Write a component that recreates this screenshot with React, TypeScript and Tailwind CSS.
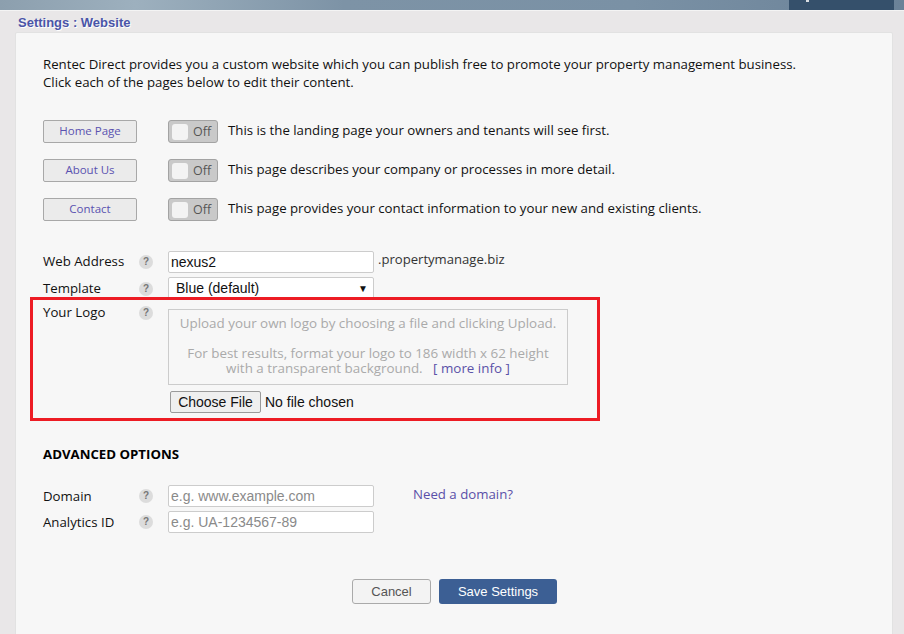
import React from 'react';

const sans = 'font-["Open_Sans",sans-serif]';
const arial = 'font-["Liberation_Sans",Arial,sans-serif]';

const pages = [
  { name: 'Home Page', text: 'This is the landing page your owners and tenants will see first.' },
  { name: 'About Us', text: 'This page describes your company or processes in more detail.' },
  { name: 'Contact', text: 'This page provides your contact information to your new and existing clients.' },
];

const Help = ({ className = '' }: { className?: string }) => (
  <span className={`flex h-[14px] w-[14px] shrink-0 items-center justify-center rounded-full bg-[#dcdcdc] text-[10px] leading-none font-bold text-[#777] ${arial} ${className}`}>
    ?
  </span>
);

const Toggle = () => (
  <div className="flex h-[23px] w-[50px] items-center rounded-[3px] border border-[#a3a3a3] bg-[#c9c9c9] pl-[3px]">
    <span className="h-[16px] w-[16px] rounded-[3px] bg-[#f3f3f3]" />
    <span className="mt-[2px] ml-[5px] text-[12.5px] leading-none text-[#555]">Off</span>
  </div>
);

export default function App() {
  return (
    <div className={`relative h-[634px] w-[904px] overflow-hidden bg-[#e9e7e8] ${sans}`}>
      {/* Top banner */}
      <div className="flex h-[11px] justify-end border-b border-[#f4f4f4] bg-[linear-gradient(90deg,#8c9fae_0%,#9db0be_15%,#7d93a6_38%,#7a91a5_70%,#6b8298_100%)] pr-[10px]">
        <div className="flex h-full w-[105px] justify-start bg-[#35506b] pl-[17px]">
          <span className="h-[2px] w-[3px] bg-[#d8dde2]" />
        </div>
      </div>

      <h1 className={`mt-[4px] ml-[18px] text-[13px] leading-[15px] font-bold text-[#4a55a8] [text-shadow:1px_1px_0_#fff] ${arial}`}>Settings : Website</h1>

      {/* Card */}
      <div className="mt-[2px] ml-[15px] h-[620px] w-[878px] rounded-t-[2px] border border-[#e2e2e2] bg-[#f7f7f7] pt-[22px] pl-[27px] text-[13.24px] text-[#111]">
        <p className="leading-[18px]">
          Rentec Direct provides you a custom website which you can publish free to promote your property management business.
          <br />
          Click each of the pages below to edit their content.
        </p>

        {/* Page rows */}
        <div className="mt-[29px] flex flex-col gap-[16px]">
          {pages.map((p) => (
            <div key={p.name} className="flex h-[23px] items-center">
              <button className="h-[23px] w-[94px] rounded-[2px] border border-[#a8a8a8] bg-[#ebebeb] pb-[1px] text-[11.5px] text-[#5a52b0]">
                {p.name}
              </button>
              <div className="ml-[31px]">
                <Toggle />
              </div>
              <span className="ml-[10px] -mt-[2px]">{p.text}</span>
            </div>
          ))}
        </div>

        {/* Site fields */}
        <div className="mt-[30px] flex h-[22px] items-center">
          <span className="w-[96px]">Web Address</span>
          <Help />
          <input
            readOnly
            value="nexus2"
            className={`ml-[15px] h-[22px] w-[206px] rounded-[2px] border border-[#ccc] bg-white px-[2px] text-[14px] text-[#111] ${arial}`}
          />
          <span className="ml-[4px] -mt-[4px] text-[13.1px] text-[#333]">.propertymanage.biz</span>
        </div>
        <div className="mt-[4px] flex h-[23px] items-center">
          <span className="w-[96px]">Template</span>
          <Help />
          <div className={`ml-[15px] flex h-[23px] w-[206px] items-center justify-between rounded-[2px] border border-[#ccc] bg-white pr-[5px] pl-[7px] text-[14px] ${arial}`}>
            <span>Blue (default)</span>
            <span className="text-[10px]">▼</span>
          </div>
        </div>

        <div className="mt-[4px] flex items-start">
          <span className="-mt-[1px] w-[96px]">Your Logo</span>
          <Help className="mt-[2px]" />
          <div className="ml-[15px] pt-[5px]">
            <div className="h-[76px] w-[400px] border border-[#ccc] pt-[6px] text-center text-[13.4px] leading-[15px] text-[#aaa]">
              Upload your own logo by choosing a file and clicking Upload.
              <br />
              <br />
              For best results, format your logo to 186 width x 62 height
              <br />
              with a transparent background. &nbsp; <span className="text-[#5a52a8]">[ more info ]</span>
            </div>
            <div className={`mt-[6px] flex items-center text-[14px] ${arial}`}>
              <button className="ml-[2px] h-[22px] w-[91px] rounded-[2px] border border-[#9a9a9a] bg-[#efefef] text-[14px] text-[#111]">Choose File</button>
              <span className="ml-[4px]">No file chosen</span>
            </div>
          </div>
        </div>

        {/* Advanced */}
        <h2 className="mt-[32px] text-[13.24px] leading-[18px] font-bold text-black">ADVANCED OPTIONS</h2>

        <div className="mt-[22px] flex h-[22px] items-center">
          <span className="mt-[1px] w-[96px]">Domain</span>
          <Help />
          <input readOnly placeholder="e.g. www.example.com" className={`ml-[15px] h-[22px] w-[206px] rounded-[2px] border border-[#ccc] bg-white px-[2px] text-[14px] placeholder:text-[#8a8a8a] ${arial}`} />
          <span className="ml-[39px] -mt-[3px] text-[#5a4fa8]">Need a domain?</span>
        </div>
        <div className="mt-[4px] flex h-[22px] items-center">
          <span className="mt-[1px] w-[96px]">Analytics ID</span>
          <Help />
          <input readOnly placeholder="e.g. UA-1234567-89" className={`ml-[15px] h-[22px] w-[206px] rounded-[2px] border border-[#ccc] bg-white px-[2px] text-[14px] placeholder:text-[#8a8a8a] ${arial}`} />
        </div>

        {/* Actions */}
        <div className={`mt-[46px] ml-[309px] flex gap-[8px] text-[13px] ${arial}`}>
          <button className="h-[25px] w-[79px] rounded-[3px] border border-[#aaa] bg-[#f3f3f3] text-[#555]">Cancel</button>
          <button className="h-[25px] w-[118px] rounded-[3px] bg-[#3c5f94] font-normal text-white">Save Settings</button>
        </div>
      </div>

      {/* Red annotation box */}
      <div className="absolute top-[297px] left-[30px] h-[124px] w-[570px] border-[3px] border-[#ed1c24]" />
    </div>
  );
}
